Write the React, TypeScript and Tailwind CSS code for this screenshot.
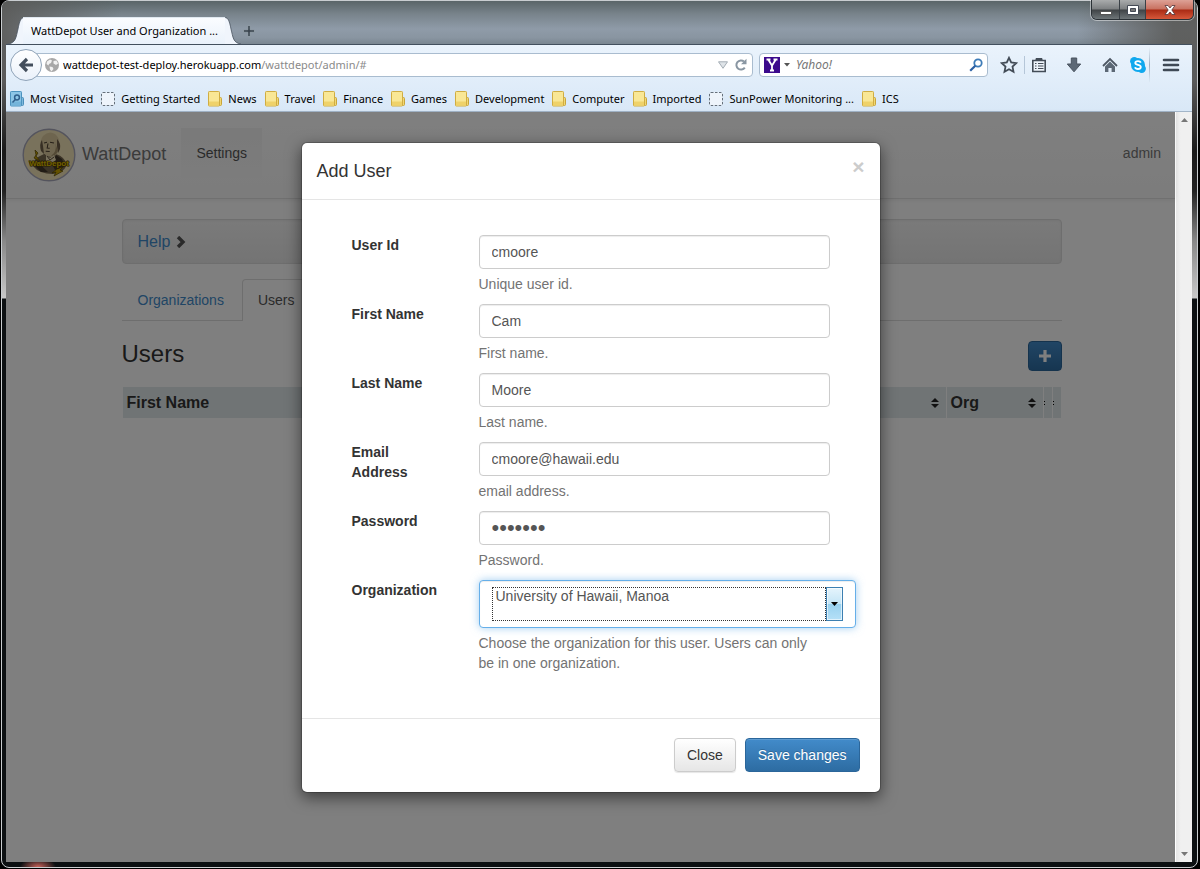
import React from "react";

const bookmarks: { label: string; kind: "folder" | "blank" | "visited" }[] = [
  { label: "Most Visited", kind: "visited" },
  { label: "Getting Started", kind: "blank" },
  { label: "News", kind: "folder" },
  { label: "Travel", kind: "folder" },
  { label: "Finance", kind: "folder" },
  { label: "Games", kind: "folder" },
  { label: "Development", kind: "folder" },
  { label: "Computer", kind: "folder" },
  { label: "Imported", kind: "folder" },
  { label: "SunPower Monitoring ...", kind: "blank" },
  { label: "ICS", kind: "folder" },
];

function BookmarkIcon({ kind }: { kind: "folder" | "blank" | "visited" }) {
  if (kind === "blank") {
    return (
      <svg className="h-4 w-3.5 shrink-0" viewBox="0 0 14 16" aria-hidden="true">
        <rect x="0.5" y="1.5" width="13" height="13" rx="1.5" fill="#eef4fb" stroke="#66707a" strokeDasharray="2.5 1.5" />
      </svg>
    );
  }
  const folder = kind === "folder";
  return (
    <svg className="h-4 w-3.5 shrink-0" viewBox="0 0 14 16" aria-hidden="true">
      <path d="M10 6.5h2.5q1 0 1 1v6q0 1-1 1H10z" fill={folder ? "#f1d774" : "#7fb9dc"} stroke={folder ? "#c9a63a" : "#4c8fba"} />
      <rect x="0.5" y="0.5" width="11" height="14.5" rx="0.8" fill={folder ? "#f9e795" : "#8cc5e6"} stroke={folder ? "#d0ad42" : "#4c93bf"} />
      <path d="M1 10.5h10v4H1z" fill={folder ? "#efd26a" : "#74b4da"} />
      {!folder && (
        <g fill="none" stroke="#2f5f8c" strokeWidth="1.5">
          <circle cx="7" cy="6.5" r="2.4" />
          <path d="M5.3 8.4 2.5 11.5" />
        </g>
      )}
    </svg>
  );
}

function WindowButtons() {
  return (
    <div className="absolute -top-px right-[3px] flex h-5 overflow-hidden rounded-b-md border border-t-0 border-[#2b3136] shadow-[0_0_0_1px_rgba(255,255,255,0.45)]">
      <button aria-label="Minimize" className="flex w-7 items-center justify-center border-r border-[#3a4046] bg-[linear-gradient(#a9abac,#7c7f81_48%,#3f4346_52%,#6e7578)] pt-1.5">
        <span className="h-1 w-3 border border-[#555] bg-white" />
      </button>
      <button aria-label="Maximize" className="flex w-[26px] items-center justify-center border-r border-[#3a4046] bg-[linear-gradient(#a9abac,#7c7f81_48%,#3f4346_52%,#6e7578)]">
        <svg className="h-2.5 w-3" viewBox="0 0 12 10" aria-hidden="true">
          <path d="M.5.5h11v9H.5z" fill="#fff" stroke="#444a55" />
          <path d="M3.5 3.5h5v3h-5z" fill="#777" stroke="#444a55" />
        </svg>
      </button>
      <button aria-label="Close window" className="flex w-[47px] items-center justify-center bg-[linear-gradient(#dda196,#c8705f_48%,#a92a14_52%,#d6583a)]">
        <svg className="h-2.5 w-3" viewBox="0 0 12 10" aria-hidden="true">
          <path d="M1 .5h3L6 3 8 .5h3L7.800 5 11 9.500H8L6 7 4 9.500H1L4.200 5z" fill="#fff" stroke="#50353a" strokeWidth=".8" />
        </svg>
      </button>
    </div>
  );
}

function TitleBar() {
  return (
    <div className="relative -ml-1 -mr-[5px] flex h-[43px] items-end rounded-t-md bg-[linear-gradient(to_right,rgba(90,90,88,0.9)_0,rgba(90,90,88,0)_10%,rgba(90,90,88,0)_90%,rgba(90,90,88,0.9)_98%),linear-gradient(#5a6568,#78838b_30%,#8f9ba8_65%,#8995a1_85%,#7b8791)]">
      <div className="ml-1.5 flex h-[27px] items-stretch" role="tablist">
        <svg className="h-[27px] w-4" viewBox="0 0 16 27" aria-hidden="true">
          <path d="M0 27C8 26 8 20 10 12 11.500 4 13 .5 16 .5V27z" fill="#f0f5fc" />
          <path d="M0 27C8 26 8 20 10 12 11.500 4 13 .5 16 .5" fill="none" stroke="#47525e" strokeWidth=".8" />
        </svg>
        <button role="tab" aria-selected="true" className="-mx-px whitespace-nowrap border-t border-[#dfe7ef] bg-[linear-gradient(#fafcff,#eaf2fb)] px-2 text-left font-['Noto_Sans',sans-serif] text-[11px] text-black">
          WattDepot User and Organization ...
        </button>
        <svg className="h-[27px] w-4" viewBox="0 0 16 27" aria-hidden="true">
          <path d="M16 27C8 26 8 20 6 12 4.500 4 3 .5 0 .5V27z" fill="#f0f5fc" />
          <path d="M16 27C8 26 8 20 6 12 4.500 4 3 .5 0 .5" fill="none" stroke="#47525e" strokeWidth=".8" />
        </svg>
        <button aria-label="New tab" className="flex w-4 items-center justify-center">
          <svg className="h-3 w-3" viewBox="0 0 12 12" aria-hidden="true">
            <path d="M4.800.5h2.400v4.300h4.300v2.400H7.200v4.300H4.800V7.200H.5V4.800h4.300z" fill="#3c4650" stroke="#a6b1bb" strokeWidth=".6" />
          </svg>
        </button>
      </div>
      <WindowButtons />
    </div>
  );
}

function Toolbar() {
  return (
    <div className="flex h-10 items-center pl-1">
      <button aria-label="Back" className="relative z-10 flex h-8 w-8 shrink-0 items-center justify-center rounded-full border border-[#8fa3b8] bg-[linear-gradient(#ffffff,#eaf1fa)]">
        <svg className="h-4 w-4" viewBox="0 0 16 16" aria-hidden="true">
          <path d="M9 2 3 8l6 6M3.500 8H15" fill="none" stroke="#434e5c" strokeWidth="3.200" />
        </svg>
      </button>
      <div className="-ml-1.5 flex h-6 min-w-0 flex-1 items-center rounded-r-sm border border-[#a9bccf] bg-white pl-2 pr-1">
        <svg className="h-3.5 w-3.5 shrink-0" viewBox="0 0 14 14" aria-hidden="true">
          <circle cx="7" cy="7" r="7" fill="#a8a8a8" />
          <path d="M2 3.500 5 1.500l2 1-1 2.500-2 1-.5 1.500-2-1.500zM8.500 3l3-.5 1.500 3-2 1.500-2.500-1.500zM4.500 8.500l3 .5 1 2-2 2.500-1.500-2z" fill="#f2f2f2" />
        </svg>
        <a href="#" className="ml-1 flex-1 truncate text-black">
          wattdepot-test-deploy.herokuapp.com<span className="text-[#8a8a8a]">/wattdepot/admin/#</span>
        </a>
        <svg className="h-2 w-2.5 shrink-0" viewBox="0 0 10 8" aria-hidden="true">
          <path d="M.5.8h9L5 7.300z" fill="#dfe4e8" stroke="#a4adb5" />
        </svg>
        <button aria-label="Reload" className="ml-1.5">
          <svg className="h-3.5 w-3.5" viewBox="0 0 14 14" aria-hidden="true">
            <path d="M10.800 9.600A4.600 4.600 0 1 1 10 3.500" fill="none" stroke="#8996a2" strokeWidth="2" />
            <path d="M12.500.8v5.400H7z" fill="#8996a2" />
          </svg>
        </button>
      </div>
      <div className="ml-1.5 flex h-6 w-[229px] shrink-0 items-center rounded-sm border border-[#a9bccf] bg-white px-1">
        <svg className="h-4 w-4 shrink-0" viewBox="0 0 16 16" aria-hidden="true">
          <path d="M0 0h16v16H0z" fill="#3c0a8c" />
          <path d="M2.500 2.500h4M9.500 2.500h4M4.500 3 8 8.500 11.500 3M8 8v5.500M6 13.500h4" fill="none" stroke="#fff" strokeWidth="1.800" />
        </svg>
        <svg className="ml-1 h-1 w-1.5 shrink-0" viewBox="0 0 6 4" aria-hidden="true">
          <path d="M0 0h6L3 3.500z" fill="#555" />
        </svg>
        <input aria-label="Search" placeholder="Yahoo!" className="ml-1.5 min-w-0 flex-1 bg-transparent text-xs italic placeholder-[#777] outline-none" />
        <svg className="h-3.5 w-3.5 shrink-0" viewBox="0 0 14 14" aria-hidden="true">
          <circle cx="9" cy="5" r="3.700" fill="none" stroke="#3e7cb8" strokeWidth="1.800" />
          <path d="M6.300 7.700 1.200 12.800" stroke="#2a5fa3" strokeWidth="2.200" />
        </svg>
      </div>
      <button aria-label="Bookmark this page" className="ml-3">
        <svg className="h-[18px] w-[18px]" viewBox="0 0 18 18" aria-hidden="true">
          <path d="m9 1.800 2.200 4.700 5 .6-3.700 3.500 1 5.100L9 13.200l-4.500 2.500 1-5.100L1.800 7.100l5-.6z" fill="none" stroke="#434c57" strokeWidth="1.800" />
        </svg>
      </button>
      <span className="ml-1.5 h-[18px] w-px bg-[#b5c6d8]" />
      <button aria-label="Show bookmarks" className="ml-1.5">
        <svg className="h-4 w-4" viewBox="0 0 16 16" aria-hidden="true">
          <path d="M1.800 3.500h12.400v11H1.800z" fill="#eef4fb" stroke="#434c57" strokeWidth="1.600" />
          <path d="M5 3.500V1.500h6v2z" fill="#434c57" stroke="#434c57" />
          <path d="M4 6.500h1.500M7 6.500h5.500M4 9h1.500M7 9h5.500M4 11.500h1.500M7 11.500h5.500" stroke="#434c57" strokeWidth="1.200" />
        </svg>
      </button>
      <button aria-label="Downloads" className="ml-[19px]">
        <svg className="h-4 w-4" viewBox="0 0 16 16" aria-hidden="true">
          <path d="M5.300 1h5.400v6h4L8 14.800 1.300 7h4z" fill="#5c6875" stroke="#49535f" />
        </svg>
      </button>
      <button aria-label="Home" className="ml-5">
        <svg className="h-4 w-4" viewBox="0 0 16 16" aria-hidden="true">
          <path d="M1 9 8 2l7 7" fill="none" stroke="#4d5763" strokeWidth="1.800" />
          <path d="m3 9.500 5-5 5 5V15H9.600v-4H6.400v4H3z" fill="#5c6875" />
        </svg>
      </button>
      <button aria-label="Skype" className="ml-3">
        <svg className="h-4 w-4" viewBox="0 0 16 16" aria-hidden="true">
          <circle cx="8" cy="8" r="7" fill="#10a8ee" />
          <circle cx="4.300" cy="4.300" r="4.200" fill="#10a8ee" />
          <circle cx="11.700" cy="11.700" r="4.200" fill="#10a8ee" />
          <path d="M10.800 5.600C10.300 4.300 9 4.100 8 4.100 6.500 4.100 5.300 4.800 5.300 6c0 2.500 5.500 1.400 5.500 4 0 1.300-1.400 2-2.800 2-1.600 0-2.700-.7-3-1.800" fill="none" stroke="#fff" strokeWidth="1.800" />
        </svg>
      </button>
      <span className="ml-[3px] h-9 w-px bg-[linear-gradient(transparent,#9fb0c2,transparent)]" />
      <button aria-label="Open menu" className="mx-3">
        <svg className="h-4 w-[18px]" viewBox="0 0 18 16" aria-hidden="true">
          <path d="M2 3h14M2 8h14M2 13h14" stroke="#3f4955" strokeWidth="2.600" strokeLinecap="round" />
        </svg>
      </button>
    </div>
  );
}

function Logo() {
  return (
    <svg className="h-[54px] w-[54px]" viewBox="0 0 54 54" role="img" aria-label="WattDepot logo">
      <circle cx="27" cy="27" r="25.800" fill="#f3e4b8" stroke="#a9a9bb" strokeWidth="1.400" />
      <path d="M11 38q0-7 7-10l6-3 10 1q9 3 11 11-4 8-14 9-14 0-20-8z" fill="#77684f" />
      <path d="M16 32q4 7 10 12h-7l-6-6zM34 27l6 4 3 7-9 6-4-8z" fill="#43382b" />
      <path d="M21 8q6-6 12-2 5 4 4 10l0 6-3 5-5 2q-6-1-8-5l-2-6q-1-6 2-10z" fill="#dccb9f" />
      <path d="M20 12q-3 4-1 11l3 3-1-8zM35 11q4 4 3 10l-2 4-1-7z" fill="#6e5f48" />
      <path d="m22 15 3-.8m3 0 4 .8m-6 .5-.8 4.500 2.500.3m-4 3 4 .2" fill="none" stroke="#4b3e2f" strokeWidth="1.100" />
      <path d="M33 15q2 5-1 10l-3 3q5 0 7-5z" fill="#a8946c" />
      <path d="m24 27 4 3 4-3 2 5-5 4-5-3z" fill="#eee0b8" />
      <path d="m25 28 3 4 4-3" fill="none" stroke="#5b4c39" />
      <path d="m13 22 3 3-2 3 4 5-6-3 2-3zM35 41l6-2-3 3 3 1-9 5 2-4-4 1z" fill="#c9a400" stroke="#594800" strokeWidth=".7" />
      <text x="27" y="38" textAnchor="middle" fontSize="8" fontWeight="700" fontFamily="Liberation Sans, sans-serif" fill="#e2c000" stroke="#4a3a00" strokeWidth="1.200" paintOrder="stroke">WattDepot</text>
    </svg>
  );
}

function SortIcon() {
  return (
    <svg className="h-2.5 w-2" viewBox="0 0 8 10" aria-hidden="true">
      <path d="M4 0 8 4H0zM0 6h8L4 10z" fill="#222" />
    </svg>
  );
}

function Page() {
  return (
    <div className="text-sm leading-5 text-[#333]">
      <nav className="flex h-[87px] items-start border-b border-[#e0e0e0] bg-[linear-gradient(#ffffff,#f8f8f8)] pl-4 pr-3.5 pt-4 shadow-[0_1px_5px_rgba(0,0,0,0.08)]">
        <Logo />
        <a href="#" className="ml-1.5 mt-4 text-lg leading-5 text-[#777]">WattDepot</a>
        <a href="#" className="ml-[15px] bg-[linear-gradient(#f4f4f4,#f9f9f9)] px-[15px] py-[15px] text-[#555]">Settings</a>
        <a href="#" className="ml-auto mt-[15px] text-[#777]">admin</a>
      </nav>
      <div className="pl-0.5 pt-5">
        <main className="mx-auto max-w-[940px]">
          <div className="flex h-[45px] items-center gap-1.5 rounded border border-[#dcdcdc] bg-[linear-gradient(#f5f5f5,#e8e8e8)] px-[15px] text-base shadow-[inset_0_1px_3px_rgba(0,0,0,0.05)]">
            <a href="#" className="text-[#428bca]">Help</a>
            <svg className="h-3 w-2.5" viewBox="0 0 10 12" aria-hidden="true">
              <path d="M2 1 7 6 2 11" fill="none" stroke="#555" strokeWidth="3.400" />
            </svg>
          </div>
          <div className="mt-4 flex border-b border-[#ddd]">
            <a href="#" className="px-4 py-2.5 text-[#428bca]">Organizations</a>
            <a href="#" className="-mb-px -mt-px ml-0.5 rounded-t border border-b-0 border-[#ddd] bg-white px-[15px] py-2.5 text-[#555]">Users</a>
          </div>
          <div className="mt-5 flex h-[30px] items-center justify-between">
            <h3 className="-mt-1 text-2xl text-[#333]">Users</h3>
            <button aria-label="Add" className="flex h-[30px] w-[34px] items-center justify-center rounded-sm border border-[#2b669a] bg-[linear-gradient(#428bca,#2d6ca2)]">
              <svg className="h-3 w-3" viewBox="0 0 12 12" aria-hidden="true">
                <path d="M6 0v12M0 6h12" stroke="#fff" strokeWidth="3.200" />
              </svg>
            </button>
          </div>
          <table className="mt-4 w-full table-fixed text-base font-bold">
            <thead>
              <tr className="h-[31px] bg-[#e0e9ea] text-left">
                <th className="border-x border-white pl-1 pr-[7px]">
                  <span className="flex items-center justify-between">First Name<SortIcon /></span>
                </th>
                <th className="w-[97px] border-r border-white pl-1 pr-[7px]">
                  <span className="flex items-center justify-between">Org<SortIcon /></span>
                </th>
                <th className="w-[9px] border-r border-white"><span className="block h-1 w-px border-y border-black" /></th>
                <th className="w-[9px] border-r border-white"><span className="block h-1 w-px border-y border-black" /></th>
              </tr>
            </thead>
          </table>
        </main>
      </div>
    </div>
  );
}

const fields = [
  { id: "user-id", label: "User Id", value: "cmoore", help: "Unique user id." },
  { id: "first-name", label: "First Name", value: "Cam", help: "First name." },
  { id: "last-name", label: "Last Name", value: "Moore", help: "Last name." },
  { id: "email", label: "Email Address", value: "cmoore@hawaii.edu", help: "email address." },
  { id: "password", label: "Password", value: "secret1", help: "Password.", secret: true },
];

function AddUserDialog() {
  return (
    <form role="dialog" aria-labelledby="dialog-title" className="w-full max-w-[580px] rounded-md border border-black/20 bg-white bg-clip-padding text-sm leading-5 text-[#333] shadow-[0_5px_15px_rgba(0,0,0,0.5)]">
      <div className="flex h-[57px] items-center justify-between border-b border-[#e5e5e5] px-[15px]">
        <h4 id="dialog-title" className="text-lg">Add User</h4>
        <button type="button" aria-label="Close dialog" className="-mt-2 text-[21px] font-bold leading-5 text-[#ccc]">×</button>
      </div>
      <div className="flex flex-col gap-2.5 px-[50px] pb-[45px] pt-[35px]">
        {fields.map((f) => (
          <div key={f.id} className="grid grid-cols-[90px_1fr] gap-x-[37px]">
            <label htmlFor={f.id} className="h-0 font-bold">{f.label}</label>
            <div>
              <input
                id={f.id}
                type={f.secret ? "password" : "text"}
                defaultValue={f.value}
                className={`block h-[34px] w-full rounded border border-[#ccc] bg-white px-3 text-[#555] shadow-[inset_0_1px_1px_rgba(0,0,0,0.075)] outline-none ${f.secret ? "text-[22px]" : "text-sm"}`}
              />
              <p className="mt-[5px] text-[#737373]">{f.help}</p>
            </div>
          </div>
        ))}
        <div className="grid grid-cols-[90px_1fr] gap-x-[37px]">
          <label htmlFor="organization" className="font-bold">Organization</label>
          <div>
            <div className="-mr-[26px] flex h-12 rounded border border-[#66afe9] bg-white px-3 py-1.5 shadow-[inset_0_1px_1px_rgba(0,0,0,0.075),0_0_8px_rgba(102,175,233,0.6)]">
              <select id="organization" className="min-w-0 flex-1 appearance-none border border-dotted border-[#333] bg-transparent pb-4 pl-[3px] text-sm leading-4 text-[#555] outline-none">
                <option>University of Hawaii, Manoa</option>
              </select>
              <span className="flex w-[17px] items-center justify-center border border-[#3c7fb1] bg-[linear-gradient(#e5f4fc,#c4e5f6_50%,#98d1ef_50%,#b5e0f7)] shadow-[inset_0_0_0_1px_rgba(255,255,255,0.6)]">
                <svg className="h-1 w-[7px]" viewBox="0 0 7 4" aria-hidden="true"><path d="M0 0h7L3.500 4z" fill="#000" /></svg>
              </span>
            </div>
            <p className="mt-[5px] pr-3 text-[#737373]">Choose the organization for this user. Users can only be in one organization.</p>
          </div>
        </div>
      </div>
      <div className="flex justify-end gap-[9px] border-t border-[#e5e5e5] px-5 pb-5 pt-[19px]">
        <button type="button" className="h-[34px] rounded border border-[#ccc] bg-[linear-gradient(#ffffff,#e6e6e6)] px-3 shadow-[0_1px_1px_rgba(0,0,0,0.1)]">Close</button>
        <button type="button" className="h-[34px] rounded border border-[#2b669a] bg-[linear-gradient(#428bca,#2d6ca2)] px-3 text-white shadow-[inset_0_1px_0_rgba(255,255,255,0.15)] [text-shadow:0_-1px_0_rgba(0,0,0,0.2)]">Save changes</button>
      </div>
    </form>
  );
}

function ScrollBar() {
  return (
    <div className="flex w-[17px] shrink-0 flex-col items-center justify-between border-l border-white bg-[linear-gradient(to_right,#e6e6e6,#f0f0f0_30%,#f0f0f0)] py-1.5" aria-hidden="true">
      <svg className="h-1 w-[7px]" viewBox="0 0 7 4"><path d="M3.500 0 7 4H0z" fill="#777" /></svg>
      <svg className="h-1 w-[7px]" viewBox="0 0 7 4"><path d="M0 0h7L3.500 4z" fill="#777" /></svg>
    </div>
  );
}

export default function App() {
  return (
    <div className="flex min-h-screen flex-col bg-black pb-px pl-px pr-0.5 font-['Liberation_Sans',Arial,sans-serif]">
      <div className="flex flex-1 flex-col rounded-lg border border-[#c9cdd0] bg-[radial-gradient(ellipse_18px_9px_at_36px_100%,#c8625a,transparent),linear-gradient(#5f6365_0,#5a5a5a_80px,#1a1a1a_150px,#222_190px,#888_240px,#c8c8c8_297px,#0c1012_298px)] pb-[5px] pl-1 pr-[5px]">
        <TitleBar />
        <header className="border-b border-t border-b-[#a3b5c8] border-t-[#43505e] bg-[linear-gradient(#eaf3fc,#d9e8f7)] font-['Noto_Sans',sans-serif] text-[11px] text-black">
          <Toolbar />
          <div className="flex h-[26px] items-center gap-2 whitespace-nowrap pl-1 pt-0.5">
            {bookmarks.map((b) => (
              <a key={b.label} href="#" className="flex items-center gap-1.5">
                <BookmarkIcon kind={b.kind} />
                {b.label}
              </a>
            ))}
          </div>
        </header>
        <div className="flex flex-1">
          <div className="relative flex-1 bg-white">
            <Page />
            <div className="absolute inset-0 flex items-start justify-center bg-black/50 pt-[30px]">
              <AddUserDialog />
            </div>
          </div>
          <ScrollBar />
        </div>
      </div>
    </div>
  );
}
